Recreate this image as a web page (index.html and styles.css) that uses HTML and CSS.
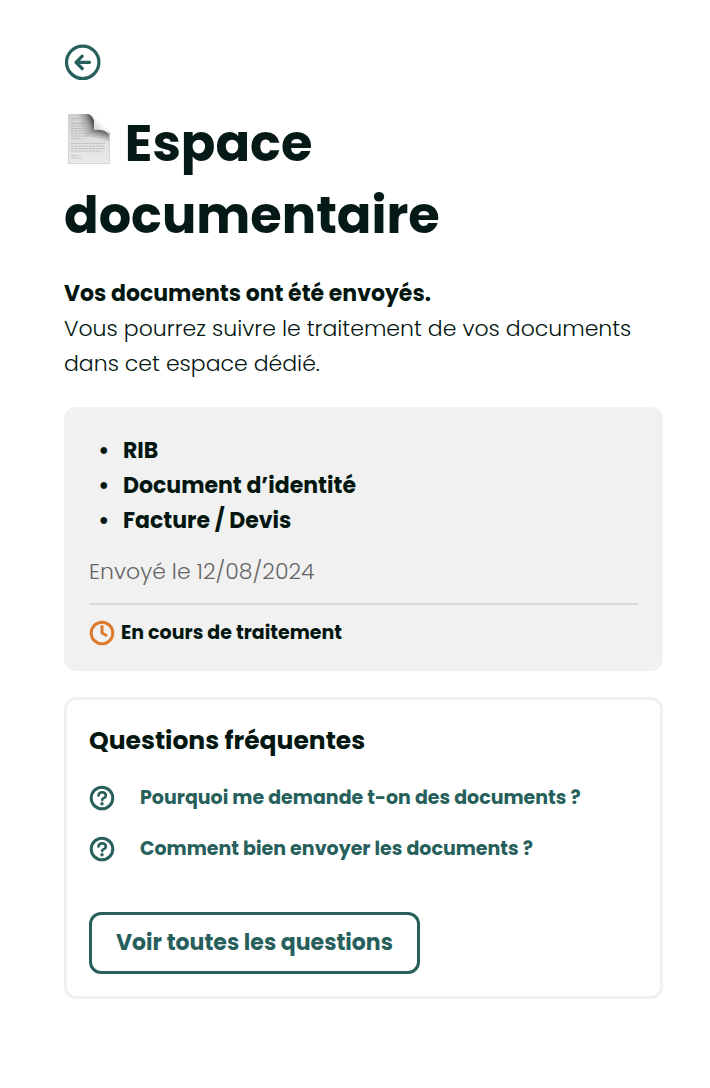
FILE: index.html
```html
<!doctype html>
<html lang="fr">

<head>
    <meta charset="utf-8">
    <meta name="viewport" content="width=device-width, initial-scale=1">
    <title>Espace documentaire</title>
    <link rel="stylesheet" href="styles.css">
</head>

<body>
<main class="page">
    <a class="back" href="#" aria-label="Retour">
        <svg width="38" height="38" viewBox="0 0 38 38" fill="none" stroke="currentColor" stroke-width="3.2" stroke-linecap="round" stroke-linejoin="round">
            <circle cx="18.700" cy="19.300" r="16.200"/>
            <path d="M25.500 19.300H12.500M18.200 13.100L12 19.300l6.200 6.200"/>
        </svg>
    </a>
    <h1 class="title">
        <svg class="title-icon" width="50" height="52" viewBox="0 0 50 52" aria-hidden="true">
            <defs>
                <linearGradient id="paper" x1="0" y1="0" x2="0" y2="1">
                    <stop offset="0" stop-color="#cfcfcf"/>
                    <stop offset=".5" stop-color="#dedede"/>
                    <stop offset="1" stop-color="#ebebeb"/>
                </linearGradient>
                <linearGradient id="shade-left" gradientUnits="userSpaceOnUse" x1="16" y1="14" x2="30" y2="9">
                    <stop offset="0" stop-color="#777" stop-opacity="0"/>
                    <stop offset=".6" stop-color="#555" stop-opacity=".45"/>
                    <stop offset="1" stop-color="#333" stop-opacity=".9"/>
                </linearGradient>
                <linearGradient id="shade-below" gradientUnits="userSpaceOnUse" x1="38" y1="16" x2="35" y2="27">
                    <stop offset="0" stop-color="#333" stop-opacity=".9"/>
                    <stop offset=".4" stop-color="#555" stop-opacity=".6"/>
                    <stop offset="1" stop-color="#777" stop-opacity="0"/>
                </linearGradient>
                <linearGradient id="fold" gradientUnits="userSpaceOnUse" x1="30" y1="17" x2="37" y2="10">
                    <stop offset="0" stop-color="#d0d0d0"/>
                    <stop offset="1" stop-color="#fafafa"/>
                </linearGradient>
            </defs>
            <path d="M4 1h20q3 0 5 2l15 14q2 2 2 5v29H4z" fill="url(#paper)"/>
            <path d="M12 1h14l4 4v11L18 28z" fill="url(#shade-left)"/>
            <path d="M30 16h13l3 4v9L18 28z" fill="url(#shade-below)"/>
            <path d="M24 1q5 2 6 7v9q11-1 16 5 0-3-2-5L30 3q-2-2-6-2z" fill="url(#fold)"/>
            <path d="M7 5.500h7M7 10.500h15M7 13h15M7 15.500h16M7 18h16M7 20.500h20M7 23h25M7 25.500h10M7 30.500h34M7 33h33M7 35.500h34M7 38h30M7 42.500h7M7 45h11" stroke="#999" stroke-width=".8" stroke-dasharray="3 .6" opacity=".6"/>
            <path d="M4.500 1v49.500h41V22" fill="none" stroke="#d0d0d0" stroke-width=".8"/>
        </svg>
        Espace documentaire
    </h1>
    <p class="intro"><strong>Vos documents ont été envoyés.</strong><br>Vous pourrez suivre le traitement de vos documents dans cet espace dédié.</p>

    <section class="card sent">
        <ul class="docs">
            <li>RIB</li>
            <li>Document d’identité</li>
            <li>Facture / Devis</li>
        </ul>
        <p class="date">Envoyé le 12/08/2024</p>
        <p class="status">
            <svg class="clock" width="26" height="26" viewBox="0 0 26 26" fill="none" stroke="currentColor" stroke-width="3" stroke-linecap="round" stroke-linejoin="round" aria-hidden="true">
                <circle cx="13" cy="13" r="10.800"/>
                <path d="M13 6.500V13l4 2.200"/>
            </svg>
            En cours de traitement
        </p>
    </section>

    <section class="card faq">
        <h2 class="faq-title">Questions fréquentes</h2>
        <ul class="faq-list">
            <li>
                <a href="#">
                    <svg width="26" height="26" viewBox="0 0 26 26" fill="none" stroke="currentColor" stroke-width="3" stroke-linecap="round" stroke-linejoin="round" aria-hidden="true">
                        <circle cx="13" cy="13" r="10.800"/>
                        <path d="M9.400 10.400q.6-3.200 3.700-3.200 3.600.1 3.700 3.200 0 1.800-2.100 2.800-1.500.7-1.600 1.700" stroke-width="2.600"/>
                        <circle cx="13" cy="18.800" r="1.700" fill="currentColor" stroke="none"/>
                    </svg>
                    Pourquoi me demande t-on des documents ?
                </a>
            </li>
            <li>
                <a href="#">
                    <svg width="26" height="26" viewBox="0 0 26 26" fill="none" stroke="currentColor" stroke-width="3" stroke-linecap="round" stroke-linejoin="round" aria-hidden="true">
                        <circle cx="13" cy="13" r="10.800"/>
                        <path d="M9.400 10.400q.6-3.200 3.700-3.200 3.600.1 3.700 3.200 0 1.800-2.100 2.800-1.500.7-1.600 1.700" stroke-width="2.600"/>
                        <circle cx="13" cy="18.800" r="1.700" fill="currentColor" stroke="none"/>
                    </svg>
                    Comment bien envoyer les documents ?
                </a>
            </li>
        </ul>
        <button class="btn" type="button">Voir toutes les questions</button>
    </section>
</main>
</body>

</html>
```
FILE: styles.css
```css
* {
    box-sizing: border-box;
    margin: 0;
    padding: 0;
}

body {
    background: #fff;
    color: #03160f;
    font-family: Poppins, Inter, sans-serif;
    font-size: 22px;
    line-height: 35px;
}

.page {
    padding: 43px 47px 64px 64px;
}

.back {
    display: inline-block;
    color: #265f5b;
}

.back svg,
.faq-list svg,
.clock {
    display: block;
    flex: none;
}

.title {
    margin-top: 16px;
    color: #051917;
    font-size: 51px;
    font-weight: 700;
    line-height: 72px;
}

.title-icon {
    vertical-align: -4px;
}

.intro {
    margin-top: 25px;
    font-weight: 300;
}

.intro strong {
    font-weight: 700;
}

.card {
    margin-top: 26px;
    border: 3px solid #f1f1f1;
    border-radius: 12px;
    padding: 22px;
}

.sent {
    background: #f1f1f1;
}

.docs {
    margin-top: 1px;
    padding-left: 34px;
    list-style-type: "•\00a0\00a0\2009";
    font-weight: 700;
}

.date {
    margin-top: 16px;
    padding-bottom: 14px;
    border-bottom: 2px solid #dadada;
    color: #666;
    font-weight: 300;
}

.status {
    display: flex;
    align-items: center;
    gap: 6px;
    margin-top: 15px;
    font-size: 19px;
    font-weight: 700;
    line-height: 26px;
}

.clock {
    color: #dc7b2d;
}

.faq-title {
    font-size: 25px;
    font-weight: 700;
    line-height: 38px;
}

.faq-list {
    list-style: none;
    margin-top: 20px;
}

.faq-list li {
    margin-bottom: 16px;
}

.faq-list a {
    display: flex;
    align-items: center;
    gap: 25px;
    color: #265f5b;
    font-size: 19px;
    font-weight: 700;
    text-decoration: none;
}

.btn {
    margin-top: 30px;
    border: 3px solid #265f5b;
    border-radius: 12px;
    padding: 10px 24px;
    background: #fff;
    color: #265f5b;
    font: inherit;
    font-weight: 700;
    line-height: 36px;
    cursor: pointer;
}
```
